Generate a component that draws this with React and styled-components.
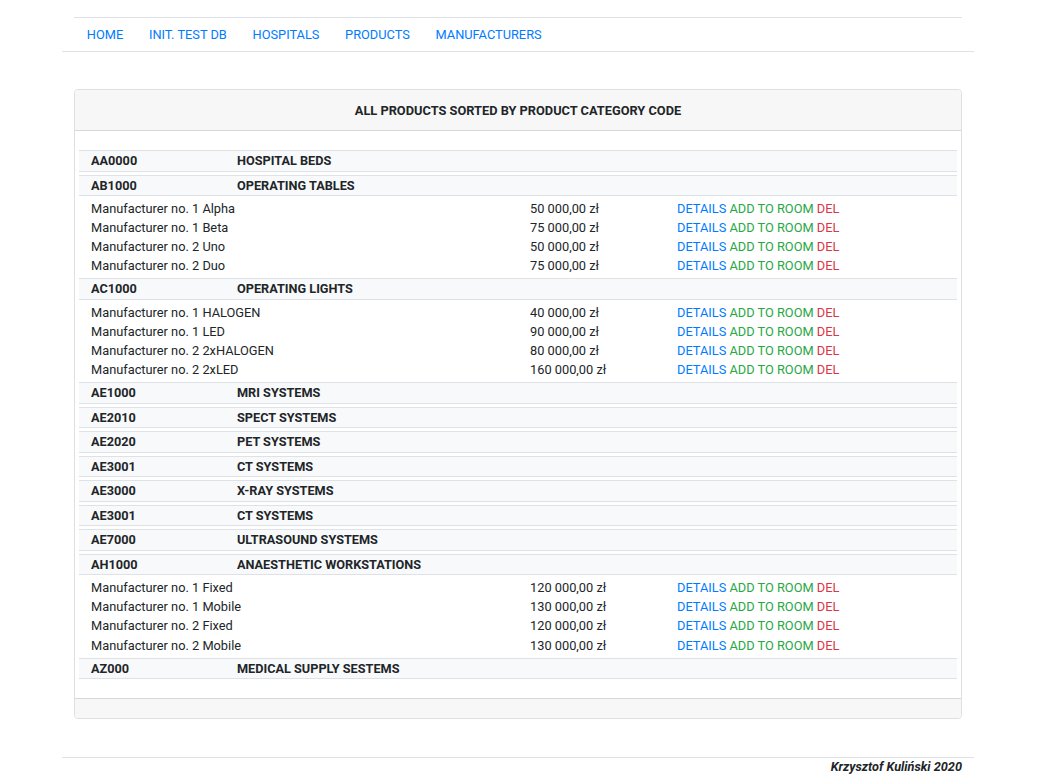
import React from 'react'
import styled, { createGlobalStyle } from 'styled-components'

const Global = createGlobalStyle`
  body { margin: 0; background: #fff; font-family: Roboto, 'Liberation Sans', sans-serif; color: #212529; }
`;

const Page = styled.div`width: 912px; margin-left: 62px; padding-top: 17px;`;

const NavBar = styled.nav`border-bottom: 1px solid #dee2e6;`;
const NavInner = styled.div`display: flex; margin: 0 12px; border-top: 1px solid #dee2e6;`;
const NavLink = styled.a`font-size: 12.8px; line-height: 32px; padding: 1px 12.85px 0; color: #007bff; text-decoration: none; text-transform: uppercase;`;

const Card = styled.section`margin: 37px 12px 0; border: 1px solid rgba(0,0,0,.125); border-radius: 4px; overflow: hidden;`;
const CardHeader = styled.header`background: #f7f7f7; border-bottom: 1px solid rgba(0,0,0,.125); text-align: center; font-size: 12.8px; font-weight: 700; line-height: 39px; padding-top: 1px;`;
const CardBody = styled.div`padding: 19px 4px 16px;`;
const CardFooter = styled.div`background: #f7f7f7; border-top: 1px solid rgba(0,0,0,.125); height: 19px;`;

const Group = styled.div`margin-bottom: 3px;`;
const GroupHead = styled.div`display: grid; grid-template-columns: 146px 1fr; padding-left: 12px; background: #f8f9fa; border-top: 1px solid #dee2e6; border-bottom: 1px solid #dee2e6; font-size: 12.7px; font-weight: 700; line-height: 19.5px;`;
const Items = styled.div`padding-top: 2.8px;`;
const Item = styled.div`display: grid; grid-template-columns: 439px 147px 1fr; padding-left: 12px; font-size: 12.8px; line-height: 19.15px;`;
const Act = styled.a`color: ${p => p.$c}; text-decoration: none;`;

const Footer = styled.footer`margin-top: 38px; border-top: 1px solid #dee2e6; text-align: right; padding-right: 12px; font-size: 12.7px; font-weight: 700; font-style: italic; line-height: 18px;`;

const groups = [
  ['AA0000', 'HOSPITAL BEDS', []],
  ['AB1000', 'OPERATING TABLES', [['Manufacturer no. 1 Alpha', '50 000,00 zł'], ['Manufacturer no. 1 Beta', '75 000,00 zł'], ['Manufacturer no. 2 Uno', '50 000,00 zł'], ['Manufacturer no. 2 Duo', '75 000,00 zł']]],
  ['AC1000', 'OPERATING LIGHTS', [['Manufacturer no. 1 HALOGEN', '40 000,00 zł'], ['Manufacturer no. 1 LED', '90 000,00 zł'], ['Manufacturer no. 2 2xHALOGEN', '80 000,00 zł'], ['Manufacturer no. 2 2xLED', '160 000,00 zł']]],
  ['AE1000', 'MRI SYSTEMS', []],
  ['AE2010', 'SPECT SYSTEMS', []],
  ['AE2020', 'PET SYSTEMS', []],
  ['AE3001', 'CT SYSTEMS', []],
  ['AE3000', 'X-RAY SYSTEMS', []],
  ['AE3001', 'CT SYSTEMS', []],
  ['AE7000', 'ULTRASOUND SYSTEMS', []],
  ['AH1000', 'ANAESTHETIC WORKSTATIONS', [['Manufacturer no. 1 Fixed', '120 000,00 zł'], ['Manufacturer no. 1 Mobile', '130 000,00 zł'], ['Manufacturer no. 2 Fixed', '120 000,00 zł'], ['Manufacturer no. 2 Mobile', '130 000,00 zł']]],
  ['AZ000', 'MEDICAL SUPPLY SESTEMS', []],
];

export default function App() {
  return (
    <Page>
      <Global />
      <NavBar>
        <NavInner>
          {['Home', 'Init. test DB', 'Hospitals', 'Products', 'Manufacturers'].map(l => <NavLink key={l} href="#">{l}</NavLink>)}
        </NavInner>
      </NavBar>
      <Card>
        <CardHeader>ALL PRODUCTS SORTED BY PRODUCT CATEGORY CODE</CardHeader>
        <CardBody>
          {groups.map(([code, name, items], i) => (
            <Group key={i}>
              <GroupHead><span>{code}</span><span>{name}</span></GroupHead>
              {items.length > 0 && (
                <Items>
                  {items.map(([n, price]) => (
                    <Item key={n}>
                      <span>{n}</span>
                      <span>{price}</span>
                      <span>
                        <Act $c="#007bff" href="#">DETAILS</Act> <Act $c="#28a745" href="#">ADD TO ROOM</Act> <Act $c="#dc3545" href="#">DEL</Act>
                      </span>
                    </Item>
                  ))}
                </Items>
              )}
            </Group>
          ))}
        </CardBody>
        <CardFooter />
      </Card>
      <Footer>Krzysztof Kuliński 2020</Footer>
    </Page>
  )
}
